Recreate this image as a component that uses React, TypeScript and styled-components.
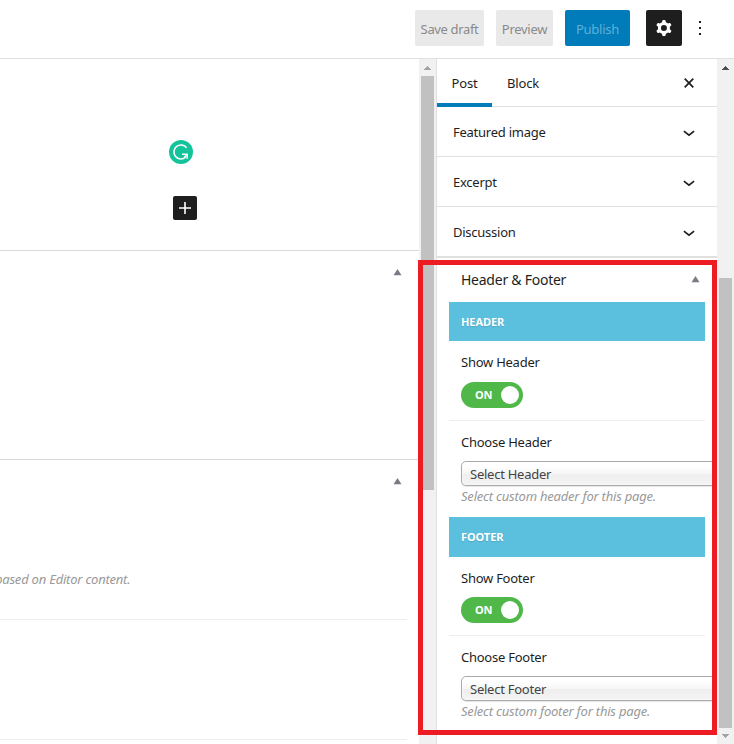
import React from "react";
import styled, { createGlobalStyle } from "styled-components";

const GlobalStyle = createGlobalStyle`
  *, *::before, *::after { box-sizing: border-box; }
  html, body { margin: 0; padding: 0; background: #fff; overflow: hidden; }
  body, button { font-family: "Noto Sans", "Open Sans", sans-serif; font-size: 13px; letter-spacing: -0.25px; }
  button { border: 0; padding: 0; background: none; }
  svg { display: block; flex: none; }
`;

const Editor = styled.div`
  position: relative;
  display: flex;
  flex-direction: column;
  width: 734px;
  height: 744px;
  overflow: hidden;
  background: #fff;
  color: #1e1e1e;
`;

const Toolbar = styled.header`
  display: flex;
  flex: none;
  align-items: flex-start;
  justify-content: flex-end;
  gap: 12px;
  height: 59px;
  padding: 10px 22px 0 0;
  border-bottom: 1px solid #e0e0e0;
`;

const ToolbarButton = styled.button<{ $width: number; $primary?: boolean; $spacing?: number }>`
  width: ${(p) => p.$width}px;
  height: 36px;
  padding-top: 2px;
  border-radius: 2px;
  background: ${(p) => (p.$primary ? "#007cba" : "#e9e9e9")};
  color: ${(p) => (p.$primary ? "#5fb0d9" : "#8a8a8a")};
  letter-spacing: ${(p) => p.$spacing ?? -0.27}px;
  white-space: nowrap;
`;

const SettingsButton = styled.button`
  display: grid;
  place-items: center;
  width: 36px;
  height: 36px;
  margin-left: 4px;
  border-radius: 2px;
  background: #1e1e1e;
  color: #fff;
`;

const MoreButton = styled.button`
  display: grid;
  place-items: center;
  width: 24px;
  height: 36px;
  margin-left: -6px;
`;

const Body = styled.div`
  display: flex;
  flex: 1;
  min-height: 0;
`;

const Canvas = styled.main`
  display: flex;
  flex-direction: column;
  width: 419px;
  overflow: hidden;
`;

const Writing = styled.section`
  display: flex;
  flex-direction: column;
  align-items: flex-start;
  gap: 32px;
  height: 191px;
  padding: 81px 0 0 169px;
`;

const AddBlock = styled.button`
  display: grid;
  place-items: center;
  width: 24px;
  height: 24px;
  margin-left: 4px;
  border-radius: 2px;
  background: #1e1e1e;
`;

const MetaBox = styled.section<{ $height: number }>`
  height: ${(p) => p.$height}px;
  border-top: 1px solid #d9d9d9;
`;

const MetaBar = styled.div`
  display: flex;
  justify-content: flex-end;
  height: 42px;
  padding: 18px 17px 0 0;
`;

const MetaField = styled.div<{ $height: number }>`
  height: ${(p) => p.$height}px;
  margin-right: 12px;
  border-bottom: 1px solid #eee;
`;

const EditorNote = styled.p`
  margin: 0;
  padding-top: 67px;
  margin-left: -5px;
  color: #999;
  font-style: italic;
  line-height: 20px;
  letter-spacing: -0.22px;
  white-space: nowrap;
`;

const ScrollTrack = styled.div`
  display: flex;
  flex: none;
  flex-direction: column;
  align-items: center;
  width: 17px;
  background: #f1f1f1;
`;

const ScrollArrow = styled.div<{ $down?: boolean }>`
  display: flex;
  flex: none;
  justify-content: center;
  width: 17px;
  height: ${(p) => (p.$down ? 16 : 17)}px;
  padding-top: ${(p) => (p.$down ? 6 : 7)}px;
`;

const ScrollThumb = styled.div<{ $offset: number; $height: number }>`
  flex: none;
  width: 13px;
  height: ${(p) => p.$height}px;
  margin-top: ${(p) => p.$offset}px;
  background: #c1c1c1;
`;

const Sidebar = styled.aside`
  display: flex;
  flex-direction: column;
  width: 281px;
  border-left: 1px solid #e0e0e0;
  overflow: hidden;
`;

const Tabs = styled.nav`
  display: flex;
  flex: none;
  height: 48px;
  padding-right: 16px;
  border-bottom: 1px solid #e0e0e0;
`;

const Tab = styled.button<{ $active?: boolean }>`
  height: 48px;
  width: ${(p) => (p.$active ? 55 : 62)}px;
  padding-bottom: 1px;
  border-bottom: 4px solid ${(p) => (p.$active ? "#007cba" : "transparent")};
  border-top: 4px solid transparent;
  color: #1e1e1e;
  letter-spacing: -0.15px;
`;

const CloseButton = styled.button`
  display: grid;
  place-items: center;
  width: 24px;
  margin-left: auto;
`;

const PanelRow = styled.div`
  display: flex;
  flex: none;
  align-items: center;
  justify-content: space-between;
  height: 50px;
  padding: 0 16px;
  border-bottom: 1px solid #e0e0e0;
`;

const Options = styled.section`
  display: flex;
  flex: none;
  flex-direction: column;
  padding: 0 12px;
  border-top: 1px solid #e0e0e0;
`;

const OptionsBar = styled.div`
  display: flex;
  justify-content: space-between;
  height: 44px;
  padding: 11px 5px 0 12px;
  font-size: 14px;
  line-height: 22px;
`;

const OptionsArrow = styled.div`
  padding-top: 7px;
`;

const SectionHeading = styled.h3<{ $height: number }>`
  height: ${(p) => p.$height}px;
  margin: 0;
  padding-left: 12px;
  background: #5bbfde;
  color: #fff;
  font-size: 11px;
  font-weight: 700;
  line-height: 40px;
  letter-spacing: -0.08px;
  text-shadow: 0 1px 1px rgba(0, 0, 0, 0.12);
`;

const ToggleField = styled.div<{ $height: number }>`
  height: ${(p) => p.$height}px;
  padding: 11px 12px 0;
  border-bottom: 1px solid #eee;
`;

const SelectField = styled.div<{ $height: number }>`
  height: ${(p) => p.$height}px;
  padding: 11px 12px 0;
`;

const Label = styled.div<{ $gap: number }>`
  height: 20px;
  margin-bottom: ${(p) => p.$gap}px;
  line-height: 20px;
`;

const Toggle = styled.button`
  display: flex;
  align-items: center;
  justify-content: space-between;
  width: 62px;
  height: 26px;
  padding: 0 4px 0 14px;
  border-radius: 13px;
  background: #4fb848;
  color: #fff;
  font-size: 11px;
  font-weight: 700;
  letter-spacing: -0.3px;
`;

const ToggleText = styled.span`
  padding-bottom: 2px;
`;

const Knob = styled.span`
  width: 18px;
  height: 18px;
  border-radius: 50%;
  background: #fff;
`;

const Select = styled.button`
  display: block;
  width: 300px;
  height: 25px;
  padding: 0 0 0 8px;
  border: 1px solid #aaa;
  border-radius: 5px;
  background: linear-gradient(#fff 20%, #f6f6f6 50%, #eee 52%, #f4f4f4 100%);
  background-clip: padding-box;
  box-shadow: 0 0 3px #fff inset, 0 1px 1px rgba(0, 0, 0, 0.1);
  color: #444;
  line-height: 24px;
  text-align: left;
`;

const Hint = styled.p`
  margin: 0;
  color: #999;
  font-style: italic;
  line-height: 20px;
  letter-spacing: -0.21px;
  white-space: nowrap;
`;

const Highlight = styled.div`
  position: absolute;
  left: 418px;
  top: 260px;
  width: 299px;
  height: 475px;
  border: 5px solid #ed1c24;
  pointer-events: none;
`;

const GearIcon = () => (
  <svg width="24" height="24" viewBox="0 0 24 24" fill="currentColor" fillRule="evenodd">
    <path d="M10.289 4.836A1 1 0 0111.275 4h1.306a1 1 0 01.987.836l.244 1.466c.787.26 1.503.679 2.108 1.218l1.393-.522a1 1 0 011.216.437l.653 1.13a1 1 0 01-.23 1.273l-1.148.944a6.025 6.025 0 010 2.435l1.149.946a1 1 0 01.23 1.272l-.653 1.13a1 1 0 01-1.216.437l-1.394-.522c-.605.54-1.32.958-2.108 1.218l-.244 1.466a1 1 0 01-.987.836h-1.306a1 1 0 01-.986-.836l-.244-1.466a5.995 5.995 0 01-2.108-1.218l-1.394.522a1 1 0 01-1.217-.436l-.653-1.131a1 1 0 01.23-1.272l1.149-.946a6.026 6.026 0 010-2.435l-1.148-.944a1 1 0 01-.23-1.272l.653-1.131a1 1 0 011.217-.437l1.393.522a5.994 5.994 0 012.108-1.218l.244-1.466zM14.929 12a3 3 0 11-6 0 3 3 0 016 0z" />
  </svg>
);

const MoreIcon = () => (
  <svg width="24" height="24" viewBox="0 0 24 24" fill="#1e1e1e">
    <path d="M11 5h2v2h-2zM11 11h2v2h-2zM11 17h2v2h-2z" />
  </svg>
);

const CloseIcon = () => (
  <svg width="10" height="10" viewBox="0 0 10 10" fill="none" stroke="#1e1e1e" strokeWidth="1.7">
    <path d="M.7.7l8.6 8.6M9.3.7L.7 9.3" />
  </svg>
);

const ChevronIcon = () => (
  <svg width="24" height="24" viewBox="0 0 24 24" fill="none" stroke="#1e1e1e" strokeWidth="1.7">
    <path d="M6.9 11.2l5.1 4 5.1-4" />
  </svg>
);

const CollapseIcon = () => (
  <svg width="9" height="7" viewBox="0 0 9 7" fill="#787c82">
    <path d="M4.5.1L8.5 6.2H.5z" />
  </svg>
);

const ArrowIcon = ({ color, down }: { color: string; down?: boolean }) => (
  <svg width="7" height="4" viewBox="0 0 7 4" fill={color} shapeRendering="crispEdges">
    <path d={down ? "M0 0h7v1H6v1H5v1H4v1H3V3H2V2H1V1H0z" : "M0 4h7V3H6V2H5V1H4V0H3v1H2v1H1v1H0z"} />
  </svg>
);

const AssistantIcon = () => (
  <svg width="24" height="24" viewBox="0 0 24 24" fill="none">
    <circle cx="12" cy="12" r="12" fill="#15c39a" />
    <path d="M17.6 7.8A7 7 0 1 0 16.6 17.2" stroke="#fff" strokeWidth="1.6" />
    <path d="M13 14.2h5.2v4.6" stroke="#fff" strokeWidth="1.5" />
    <path d="M18 14.4l-2.6 3" stroke="#fff" strokeWidth="1.6" />
  </svg>
);

const PlusIcon = () => (
  <svg width="12" height="12" viewBox="0 0 12 12" stroke="#fff" strokeWidth="1.6">
    <path d="M6 0v12M0 6h12" />
  </svg>
);

const panels = ["Featured image", "Excerpt", "Discussion"];

const groups = [
  { name: "Header", heading: 39, toggle: 80, gap: 10, select: 96, hint: "Select custom header for this page." },
  { name: "Footer", heading: 40, toggle: 79, gap: 9, select: 97, hint: "Select custom footer for this page." },
];

export default function App() {
  return (
    <Editor>
      <GlobalStyle />
      <Toolbar>
        <ToolbarButton $width={69} $spacing={-0.35}>Save draft</ToolbarButton>
        <ToolbarButton $width={57}>Preview</ToolbarButton>
        <ToolbarButton $width={65} $primary>Publish</ToolbarButton>
        <SettingsButton aria-label="Settings"><GearIcon /></SettingsButton>
        <MoreButton aria-label="Options"><MoreIcon /></MoreButton>
      </Toolbar>
      <Body>
        <Canvas>
          <Writing>
            <AssistantIcon />
            <AddBlock aria-label="Add block"><PlusIcon /></AddBlock>
          </Writing>
          <MetaBox $height={209}>
            <MetaBar><CollapseIcon /></MetaBar>
          </MetaBox>
          <MetaBox $height={285}>
            <MetaBar><CollapseIcon /></MetaBar>
            <MetaField $height={118}>
              <EditorNote>based on Editor content.</EditorNote>
            </MetaField>
            <MetaField $height={120} />
          </MetaBox>
        </Canvas>
        <ScrollTrack>
          <ScrollArrow><ArrowIcon color="#a3a3a3" /></ScrollArrow>
          <ScrollThumb $offset={0} $height={414} />
        </ScrollTrack>
        <Sidebar>
          <Tabs>
            <Tab $active>Post</Tab>
            <Tab>Block</Tab>
            <CloseButton aria-label="Close settings"><CloseIcon /></CloseButton>
          </Tabs>
          {panels.map((title) => (
            <PanelRow key={title}>
              <span>{title}</span>
              <ChevronIcon />
            </PanelRow>
          ))}
          <Options>
            <OptionsBar>
              Header &amp; Footer
              <OptionsArrow><CollapseIcon /></OptionsArrow>
            </OptionsBar>
            {groups.map((group) => (
              <React.Fragment key={group.name}>
                <SectionHeading $height={group.heading}>{group.name.toUpperCase()}</SectionHeading>
                <ToggleField $height={group.toggle}>
                  <Label $gap={group.gap}>Show {group.name}</Label>
                  <Toggle><ToggleText>ON</ToggleText><Knob /></Toggle>
                </ToggleField>
                <SelectField $height={group.select}>
                  <Label $gap={9}>Choose {group.name}</Label>
                  <Select>Select {group.name}</Select>
                  <Hint>{group.hint}</Hint>
                </SelectField>
              </React.Fragment>
            ))}
          </Options>
        </Sidebar>
        <ScrollTrack>
          <ScrollArrow><ArrowIcon color="#505050" /></ScrollArrow>
          <ScrollThumb $offset={202} $height={450} />
          <ScrollArrow $down><ArrowIcon color="#a3a3a3" down /></ScrollArrow>
        </ScrollTrack>
      </Body>
      <Highlight />
    </Editor>
  );
}
